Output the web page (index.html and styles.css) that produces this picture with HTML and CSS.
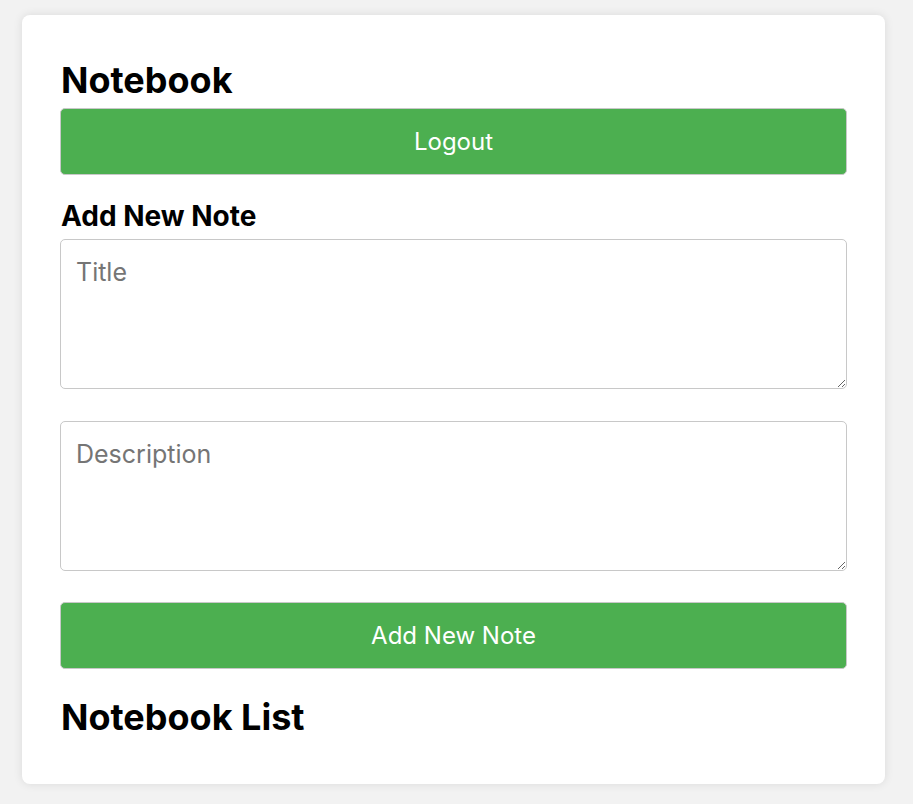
FILE: index.html
```html
<!DOCTYPE html>
<html lang="en">
<head>
<meta charset="utf-8">
<title>Notebook</title>
<link rel="stylesheet" href="styles.css">
</head>
<body>
<main class="card">
  <h1 class="title">Notebook</h1>
  <button class="btn btn-logout" type="button">Logout</button>
  <h2 class="subtitle">Add New Note</h2>
  <form class="note-form">
    <textarea class="field" placeholder="Title"></textarea>
    <textarea class="field" placeholder="Description"></textarea>
    <button class="btn" type="button">Add New Note</button>
  </form>
  <h1 class="title title-list">Notebook List</h1>
</main>
</body>
</html>
```
FILE: styles.css
```css
html, body {
  margin: 0;
  padding: 0;
}
body {
  background: #f2f2f2;
  font-family: Inter, "Liberation Sans", sans-serif;
  padding: 15px 0 21px 22px;
}
.card {
  width: 863px;
  box-sizing: border-box;
  background: #fff;
  border-radius: 8px;
  box-shadow: 0 0 10px rgba(0, 0, 0, 0.1);
  padding: 45px 38px 47px 38px;
}
.title {
  margin: 0 0 8px;
  padding-left: 1px;
  font-size: 36px;
  line-height: 40px;
  font-weight: 700;
  color: #000;
}
.title-list {
  margin: 28px 0 0;
}
.subtitle {
  margin: 26px 0 8px;
  padding-left: 1px;
  font-size: 28px;
  line-height: 30px;
  font-weight: 700;
  color: #000;
}
.btn {
  display: flex;
  align-items: center;
  justify-content: center;
  width: 100%;
  height: 67px;
  box-sizing: border-box;
  background: #4caf50;
  color: #fff;
  border: 1px solid #c8c8c8;
  border-radius: 5px;
  font-family: inherit;
  font-size: 24px;
  padding: 0;
}
.note-form {
  display: flex;
  flex-direction: column;
  gap: 32px;
}
.note-form .btn {
  margin-top: -1px;
}
.field {
  display: block;
  width: 100%;
  height: 150px;
  box-sizing: border-box;
  border: 1px solid #c8c8c8;
  border-radius: 5px;
  padding: 13px 15px;
  font-family: inherit;
  font-size: 25px;
  line-height: 38px;
  color: #000;
  margin: 0;
}
.field::placeholder {
  color: #757575;
}
```
